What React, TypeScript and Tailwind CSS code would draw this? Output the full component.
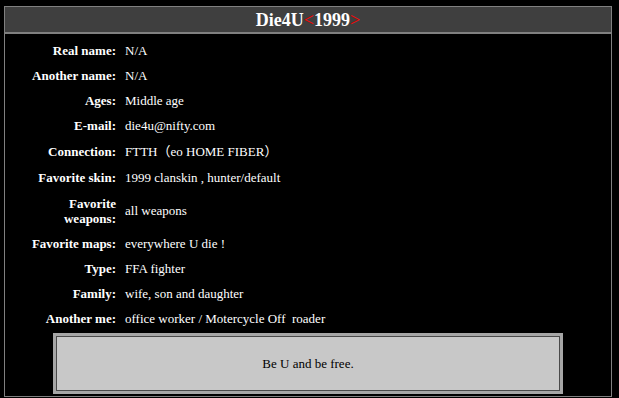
const PROFILE: { label: React.ReactNode; value: string; h: string }[] = [
  { label: 'Real name:', value: 'N/A', h: 'h-[25px]' },
  { label: 'Another name:', value: 'N/A', h: 'h-[25px]' },
  { label: 'Ages:', value: 'Middle age', h: 'h-[25px]' },
  { label: 'E-mail:', value: 'die4u@nifty.com', h: 'h-[25px]' },
  { label: 'Connection:', value: 'FTTH（eo HOME FIBER）', h: 'h-[26px]' },
  { label: 'Favorite skin:', value: '1999 clanskin , hunter/default', h: 'h-[26px]' },
  {
    label: (
      <>
        Favorite
        <br />
        weapons:
      </>
    ),
    value: 'all weapons',
    h: 'h-[41px]',
  },
  { label: 'Favorite maps:', value: 'everywhere U die !', h: 'h-[25px]' },
  { label: 'Type:', value: 'FFA fighter', h: 'h-[25px]' },
  { label: 'Family:', value: 'wife, son and daughter', h: 'h-[25px]' },
  { label: 'Another me:', value: 'office worker / Motercycle Off\u00a0 roader', h: 'h-[25px]' },
];

export default function App() {
  return (
    <div className="min-h-[398px] bg-black pt-[6px] px-[4px] font-['Liberation_Serif','Noto_Sans_CJK_JP',serif] text-white">
      <div className="w-[608px] border border-[#808080]">
        {/* title bar */}
        <div className="h-[25px] bg-[#3f3f3f] border-b-2 border-[#808080] box-content flex items-center justify-center text-[18px] font-bold leading-none">
          Die4U<span className="text-[#ff0000] font-normal">&lt;</span>1999<span className="text-[#ff0000] font-normal">&gt;</span>
        </div>

        <div className="pt-[4px] pb-[2px]">
          {PROFILE.map((row, i) => (
            <div key={i} className={`${row.h} flex items-center text-[13px] leading-[15px]`}>
              <div className="w-[111px] shrink-0 text-right font-bold whitespace-nowrap">{row.label}</div>
              <div className="pl-[9px] whitespace-nowrap">{row.value}</div>
            </div>
          ))}

          {/* motto box */}
          <div className="mx-[48px] mt-[2px] border-[3px] border-[#a6a6a6] bg-[#c8c8c8]">
            <div className="h-[55px] border border-[#4a4a4a] flex items-center justify-center text-[13px] text-black">
              Be U and be free.
            </div>
          </div>
        </div>
      </div>
    </div>
  );
}
